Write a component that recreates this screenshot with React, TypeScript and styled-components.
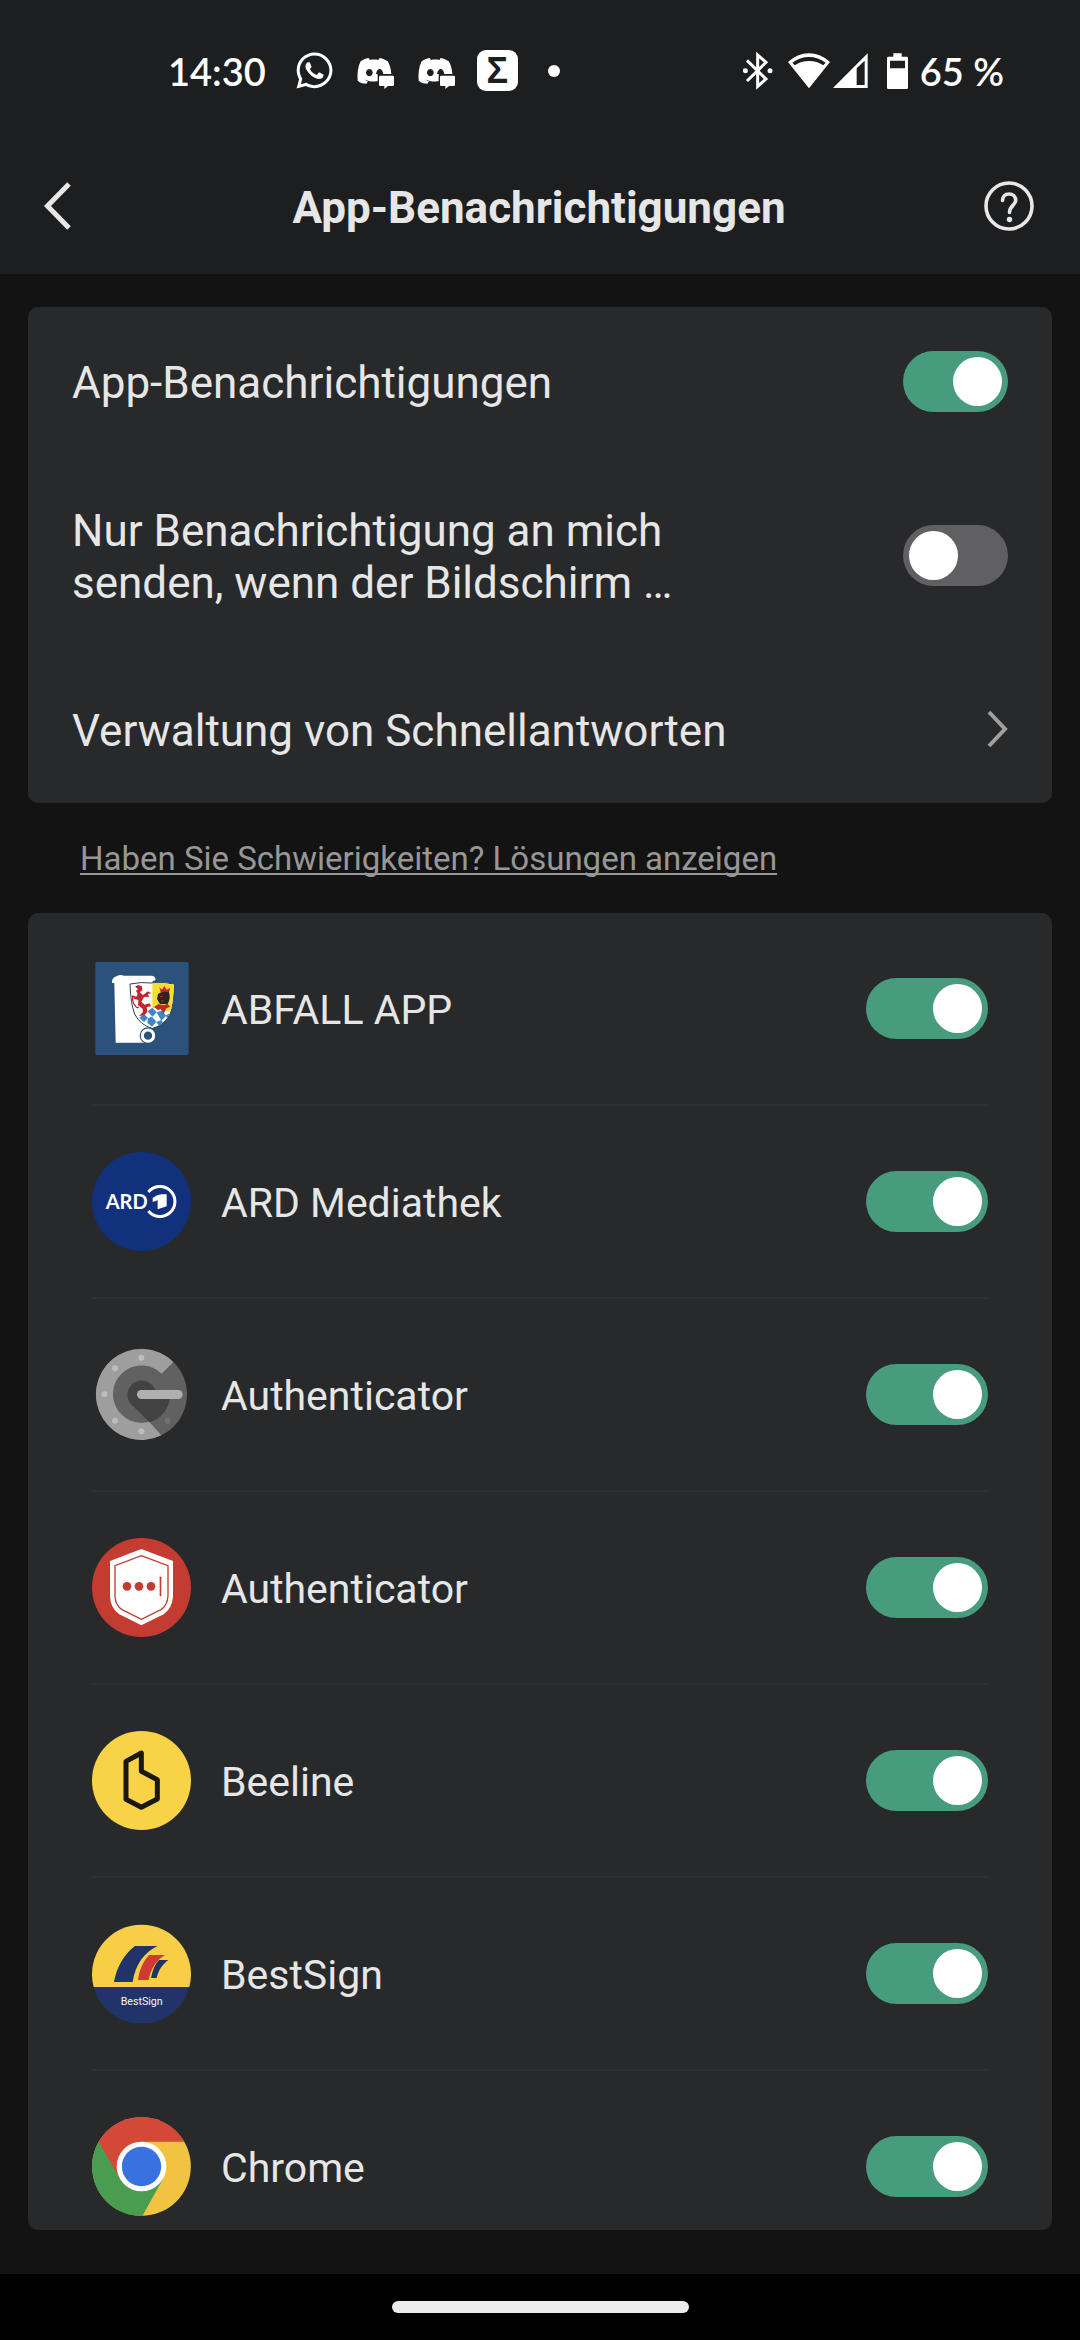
import React, { useState } from "react";
import styled, { createGlobalStyle } from "styled-components";
import { FaWhatsapp } from "react-icons/fa";

const GlobalStyle = createGlobalStyle`
  *, *::before, *::after { box-sizing: border-box; }
  html, body { margin: 0; background: #131313; }
  body { font-family: Roboto, "Noto Sans", sans-serif; color: #e6e6e6; }
`;

const Screen = styled.div`
  display: flex;
  flex-direction: column;
  height: 100vh;
  background: #131313;
`;

const TopArea = styled.header`
  flex: none;
  background: #1d1e20;
`;

const StatusBar = styled.div`
  display: flex;
  align-items: center;
  justify-content: space-between;
  height: 137px;
  padding: 4px 76px 0 168px;
  color: #ffffff;
  font-family: Lato, "Open Sans", sans-serif;
  font-size: 38px;
  font-weight: 600;
  line-height: 48px;
`;

const StatusGroup = styled.div`
  display: flex;
  align-items: center;
  gap: 20px;
`;

const Clock = styled.time`
  margin-right: 8px;
`;

const SystemGroup = styled.div`
  display: flex;
  align-items: center;
`;

const StatusGlyph = styled.svg<{ $w: number; $gap?: number }>`
  display: block;
  width: ${(p) => p.$w}px;
  height: 40px;
  margin-right: ${(p) => p.$gap ?? 0}px;
  fill: currentColor;
`;

const SigmaBadge = styled.span`
  display: flex;
  align-items: center;
  justify-content: center;
  width: 41px;
  height: 41px;
  border-radius: 9px;
  background: #ffffff;
  color: #1d1e20;
  font-family: "Liberation Sans", sans-serif;
  font-size: 36px;
  font-weight: 700;
  line-height: 40px;
`;

const MoreDot = styled.span`
  width: 12px;
  height: 12px;
  margin-left: 10px;
  border-radius: 50%;
  background: #ffffff;
`;

const TitleBar = styled.div`
  display: grid;
  grid-template-columns: 50px 1fr 50px;
  align-items: center;
  height: 137px;
  padding: 0 46px 0 44px;
`;

const Title = styled.h1`
  margin: 0;
  padding-top: 4px;
  font-size: 44px;
  font-weight: 700;
  line-height: 52px;
  text-align: center;
`;

const IconButton = styled.button`
  display: block;
  width: 50px;
  height: 52px;
  padding: 0;
  border: 0;
  background: none;
  color: #e8e8e8;

  svg {
    display: block;
    width: 50px;
    height: 52px;
  }
`;

const Content = styled.main`
  display: flex;
  flex: 1;
  flex-direction: column;
  min-height: 0;
  padding: 33px 28px 44px;
`;

const Card = styled.section`
  flex: none;
  border-radius: 10px;
  background: #28292b;
`;

const settingLayout = `
  display: flex;
  align-items: center;
  justify-content: space-between;
  width: 100%;
  min-height: 148px;
  padding: 44px;
`;

const SettingRow = styled.label`
  ${settingLayout}
`;

const SettingButton = styled.button`
  ${settingLayout}
  border: 0;
  background: none;
  color: inherit;
  font: inherit;
  text-align: left;
`;

const SettingText = styled.span`
  max-width: 680px;
  padding: 5px 0 2px;
  font-size: 44px;
  line-height: 52px;
`;

const Chevron = styled.svg`
  width: 22px;
  height: 40px;
`;

const HelpLine = styled.p`
  flex: none;
  margin: 0;
  padding: 36px 52px 34px;
  font-size: 33px;
  line-height: 40px;
`;

const HelpLink = styled.a`
  color: #979797;
  text-decoration: underline;
  text-decoration-thickness: 2px;
  text-decoration-skip-ink: none;
  text-underline-offset: 3px;
`;

const AppCard = styled(Card)`
  flex: 1;
  min-height: 0;
  overflow: hidden;
`;

const AppList = styled.ul`
  margin: 0;
  padding: 0 64px;
  list-style: none;
`;

const AppItem = styled.li`
  border-bottom: 2px solid #2e2f31;
`;

const AppRow = styled.label`
  display: flex;
  align-items: center;
  gap: 30px;
  height: 191px;
`;

const AppIcon = styled.svg`
  flex: none;
  width: 99px;
  height: 99px;
`;

const AppName = styled.span`
  flex: 1;
  padding-top: 3px;
  font-size: 41px;
  line-height: 48px;
`;

const Toggle = styled.input<{ $wide?: boolean }>`
  appearance: none;
  display: flex;
  flex: none;
  align-items: center;
  justify-content: flex-start;
  width: ${(p) => (p.$wide ? 122 : 105)}px;
  height: 61px;
  margin: 0;
  padding: 0 6px;
  border-radius: 31px;
  background: #606062;

  &::before {
    content: "";
    width: 49px;
    height: 49px;
    border-radius: 50%;
    background: #ffffff;
  }

  &:checked {
    justify-content: flex-end;
    background: #479c7e;
  }
`;

const NavBar = styled.footer`
  display: flex;
  flex: none;
  align-items: center;
  justify-content: center;
  height: 66px;
  background: #000000;
`;

const HomePill = styled.span`
  width: 297px;
  height: 12px;
  border-radius: 6px;
  background: #ececec;
`;

const DiscordGlyph = () => (
  <StatusGlyph $w={41} viewBox="643 63 123 120">
    <path
      fillRule="evenodd"
      d="M684 84 C673 86 664 90 659 95 C652 110 649 130 651 152 C659 159 668 161 677 161 L682 154 C678 153 675 151 673 149 C684 154 697 155 711 154 L711 132 L752 132 C751 117 747 103 741 94 C734 89 726 86 717 84 L713 90 C705 88 695 88 688 90 Z M686 117 a10 11 0 1 0 0.1 0 Z M706 132 c2 -10 6 -15 11 -15 c5 0 9 5 11 15 Z"
    />
    <path d="M719 137 H756 Q760 137 760 141 V164 Q760 168 756 168 H742 L731 177 V168 H719 Q715 168 715 164 V141 Q715 137 719 137 Z" />
  </StatusGlyph>
);

const AbfallIcon = () => (
  <AppIcon viewBox="36 60 297 297">
    <rect x="46" y="69" width="280" height="279" rx="5" fill="#2a527d" />
    <path d="M96 132 Q95 118 105 114 L112 110 Q122 106 132 110 L216 110 Q228 112 226 124 L218 126 L206 311 L107 311 L103 132 Z" fill="#fff" />
    <path d="M150 135 Q184 128 216 132 Q250 128 283 135 Q283 195 270 225 Q255 258 217 268 Q180 258 164 225 Q152 195 150 135 Z" fill="#fff" stroke="#33404d" strokeWidth="3" />
    <path d="M217 133 Q250 130 281 137 Q281 180 272 218 L217 207 Z" fill="#f4e02c" />
    <path d="M176 238 L217 206 L270 222 Q252 257 217 266 Q192 260 176 238 Z" fill="#fff" />
    <path d="M178 236 l14 -11 l12 12 l-12 12 Z M203 217 l14 -11 l13 14 l-13 13 Z M204 238 l12 -5 l13 15 l-13 15 l-14 -12 Z M230 220 l16 -5 l13 15 l-15 15 Z M229 249 l14 -6 l6 7 l-12 10 Z M258 229 l12 -6 l-9 16 Z" fill="#3f86c4" />
    <path d="M165 143 l9 -5 l12 4 l1 12 l-8 6 l10 8 l15 -11 l10 6 l-11 2 l5 8 l-16 1 l-8 14 l10 9 l14 -4 l6 9 l-14 2 l2 14 l-9 11 l-16 2 l12 -12 l-1 -10 l-14 -10 l1 -16 l-13 -4 l-5 -10 l12 4 l4 -8 l-5 -10 l7 -4 Z" fill="#c2252e" />
    <path d="M158 170 q-2 18 6 28 q7 12 12 6" fill="none" stroke="#c2252e" strokeWidth="4" />
    <path d="M238 145 l8 7 l7 -11 l7 11 l10 -5 l-3 14 l-25 -1 Z" fill="#c2252e" />
    <path d="M234 165 Q248 154 267 160 Q273 178 263 195 L240 196 L231 180 Z" fill="#2a2523" />
    <path d="M222 204 l14 -9 q12 8 26 -1 l9 9 l-12 5 l-8 16 l-9 -14 l-8 3 Z" fill="#c2252e" />
    <path d="M240 173 h9 M243 186 h8" stroke="#b83036" strokeWidth="3" />
    <circle cx="204" cy="290" r="25" fill="#2a527d" />
    <circle cx="204" cy="290" r="17" fill="#2a527d" stroke="#fff" strokeWidth="9" />
  </AppIcon>
);

const ArdIcon = () => (
  <AppIcon viewBox="36 639 297 297">
    <circle cx="184.500" cy="787.500" r="148.500" fill="#11317d" />
    <text x="77" y="810" fill="#fff" fontFamily="Lato, sans-serif" fontWeight="700" fontSize="60">
      ARD
    </text>
    <path d="M205 759 A45 45 0 1 1 205 816" fill="none" stroke="#fff" strokeWidth="9" />
    <path d="M218 777 Q232 767 244 766 H260 V802 L233 811 V784 L218 789 Z" fill="#fff" />
  </AppIcon>
);

const GoogleAuthIcon = () => (
  <AppIcon viewBox="36 48 297 297">
    <circle cx="184.500" cy="196" r="136.500" fill="#616161" />
    <path d="M280 99 A136.500 136.500 0 1 0 244 319 L209 280 L184 196 L245 134 Z" fill="#9e9e9e" />
    <path d="M245 134 A86 86 0 1 0 209 278 L270 205 Z" fill="#616161" />
    <path d="M226 184 A43 43 0 1 0 153 226 L209 280 A86 86 0 0 0 270 202 Z" fill="#424242" />
    <rect x="171" y="183" width="137" height="27" rx="13.500" fill="#b0b0b0" />
    <g fill="#bdbdbd">
      <circle cx="184" cy="86" r="9" />
      <circle cx="105" cy="118" r="9" />
      <circle cx="73" cy="196" r="9" />
      <circle cx="105" cy="275" r="9" />
      <circle cx="184" cy="307" r="9" />
    </g>
    <circle cx="263" cy="275" r="9" fill="#737373" />
  </AppIcon>
);

const ShieldAuthIcon = () => (
  <AppIcon viewBox="36 627 297 297">
    <circle cx="184.500" cy="775.500" r="148.500" fill="#c33b31" />
    <path d="M184 660 L279 696 V802 Q277 837 251 856 L184 889 L118 856 Q91 837 90 802 V696 Z" fill="#fff" />
    <path d="M184 680 L264 710 V801 Q262 829 243 842 L184 871 L126 842 Q106 829 105 801 V710 Z" fill="none" stroke="#c33b31" strokeWidth="4" />
    <g fill="#c33b31">
      <circle cx="141" cy="772" r="13" />
      <circle cx="177" cy="772" r="13" />
      <circle cx="213" cy="772" r="13" />
      <rect x="239" y="743" width="5" height="59" rx="2" />
    </g>
  </AppIcon>
);

const BeelineIcon = () => (
  <AppIcon viewBox="36 66 297 297">
    <circle cx="184.500" cy="214.500" r="148.500" fill="#f8d348" />
    <path d="M184 132 L138 157 V271 L184 295 L232 270 V212 L184 187 Z" fill="none" stroke="#1a1812" strokeWidth="15" strokeLinejoin="round" />
  </AppIcon>
);

const BestSignIcon = () => (
  <AppIcon viewBox="36 645 297 297">
    <path d="M41 834 A148.500 148.500 0 1 1 328 834 Z" fill="#f8ce46" />
    <path d="M41 834 A148.500 148.500 0 0 0 328 834 Z" fill="#213469" />
    <path d="M102 819 C110 775 132 735 165 711 H233 C195 728 166 765 158 819 Z" fill="#213469" />
    <path d="M174 813 C178 782 190 757 207 738 H255 C231 752 212 778 206 813 Z" fill="#cf3b30" />
    <path d="M213 807 C217 786 224 767 237 753 H265 C249 765 235 783 230 807 Z" fill="#213469" />
    <text x="185" y="888" fill="#f2f4f8" fontFamily="Roboto, sans-serif" fontSize="32" textAnchor="middle">
      BestSign
    </text>
  </AppIcon>
);

const ChromeIcon = () => (
  <AppIcon viewBox="36 39 297 297">
    <circle cx="184.500" cy="187.500" r="148" fill="#f2c343" />
    <path d="M56 113 A148.500 148.500 0 0 0 187 336 L249 225 L184 187 Z" fill="#4a9c50" />
    <path d="M56 113 A148.500 148.500 0 0 1 313 113 H184 L184 187 L121 225 Z" fill="#d34836" />
    <circle cx="184.500" cy="187.500" r="74.500" fill="#fff" />
    <circle cx="184.500" cy="187.500" r="59" fill="#3871e0" />
  </AppIcon>
);

const apps = [
  { name: "ABFALL APP", Icon: AbfallIcon },
  { name: "ARD Mediathek", Icon: ArdIcon },
  { name: "Authenticator", Icon: GoogleAuthIcon },
  { name: "Authenticator", Icon: ShieldAuthIcon },
  { name: "Beeline", Icon: BeelineIcon },
  { name: "BestSign", Icon: BestSignIcon },
  { name: "Chrome", Icon: ChromeIcon },
];

export default function App() {
  const [enabled, setEnabled] = useState(apps.map(() => true));
  const flip = (index: number) =>
    setEnabled((list) => list.map((on, i) => (i === index ? !on : on)));

  return (
    <Screen>
      <GlobalStyle />
      <TopArea>
        <StatusBar>
          <StatusGroup>
            <Clock>14:30</Clock>
            <FaWhatsapp size={41} />
            <DiscordGlyph />
            <DiscordGlyph />
            <SigmaBadge>Σ</SigmaBadge>
            <MoreDot />
          </StatusGroup>
          <SystemGroup>
            <StatusGlyph $w={30} $gap={15} viewBox="62 63 90 120">
              <path d="M74 91 L131 147 L106 169 V75 L131 97 L74 153" fill="none" stroke="currentColor" strokeWidth="9" />
              <circle cx="69" cy="122" r="7.500" />
              <circle cx="143" cy="122" r="7.500" />
            </StatusGlyph>
            <StatusGlyph $w={42} $gap={3} viewBox="197 63 126 120">
              <path
                fillRule="evenodd"
                d="M197 96 Q225 70 260 70 Q295 70 323 96 L260 175 Z M210 98 L217 106 Q236 93 260 93 Q284 93 303 106 L310 98 Q287 81 260 81 Q233 81 210 98 Z"
              />
            </StatusGlyph>
            <StatusGlyph $w={35} $gap={19} viewBox="331 63 105 120">
              <path fillRule="evenodd" d="M331 174 L435 70 V174 Z M402 115 V165 H426 V92 Z" />
            </StatusGlyph>
            <StatusGlyph $w={21} $gap={12} viewBox="495 63 63 120">
              <path
                fillRule="evenodd"
                d="M514 70 H539 V80 H554 Q558 80 558 84 V173 Q558 177 554 177 H499 Q495 177 495 173 V84 Q495 80 499 80 H514 Z M504 92 V115 H549 V92 Z"
              />
            </StatusGlyph>
            <span>65 %</span>
          </SystemGroup>
        </StatusBar>
        <TitleBar>
          <IconButton aria-label="Zurück">
            <svg viewBox="0 0 50 52" fill="none" stroke="currentColor" strokeWidth="5">
              <path d="M25 4 L3.500 26 L25 48" />
            </svg>
          </IconButton>
          <Title>App-Benachrichtigungen</Title>
          <IconButton aria-label="Hilfe">
            <svg viewBox="0 0 50 52" fill="none" stroke="currentColor" strokeWidth="3.600">
              <circle cx="25" cy="26" r="23" />
              <path d="M18.500 20.500 C18.500 16.500 21 14 25 14 C29 14 31.700 16.500 31.700 20.200 C31.700 25.500 25.500 25.500 25.500 32.500" strokeLinecap="round" />
              <circle cx="25.500" cy="39.500" r="2.700" fill="currentColor" stroke="none" />
            </svg>
          </IconButton>
        </TitleBar>
      </TopArea>

      <Content>
        <Card>
          <SettingRow>
            <SettingText>App-Benachrichtigungen</SettingText>
            <Toggle type="checkbox" defaultChecked />
          </SettingRow>
          <SettingRow>
            <SettingText>Nur Benachrichtigung an mich senden, wenn der Bildschirm …</SettingText>
            <Toggle type="checkbox" />
          </SettingRow>
          <SettingButton>
            <SettingText>Verwaltung von Schnellantworten</SettingText>
            <Chevron viewBox="0 0 22 40" fill="none" stroke="#a0a0a0" strokeWidth="4">
              <path d="M3 3 L19 20 L3 37" />
            </Chevron>
          </SettingButton>
        </Card>

        <HelpLine>
          <HelpLink href="#hilfe">Haben Sie Schwierigkeiten? Lösungen anzeigen</HelpLink>
        </HelpLine>

        <AppCard>
          <AppList>
            {apps.map(({ name, Icon }, index) => (
              <AppItem key={index}>
                <AppRow>
                  <Icon />
                  <AppName>{name}</AppName>
                  <Toggle
                    $wide
                    type="checkbox"
                    checked={enabled[index]}
                    onChange={() => flip(index)}
                  />
                </AppRow>
              </AppItem>
            ))}
          </AppList>
        </AppCard>
      </Content>

      <NavBar>
        <HomePill />
      </NavBar>
    </Screen>
  );
}
